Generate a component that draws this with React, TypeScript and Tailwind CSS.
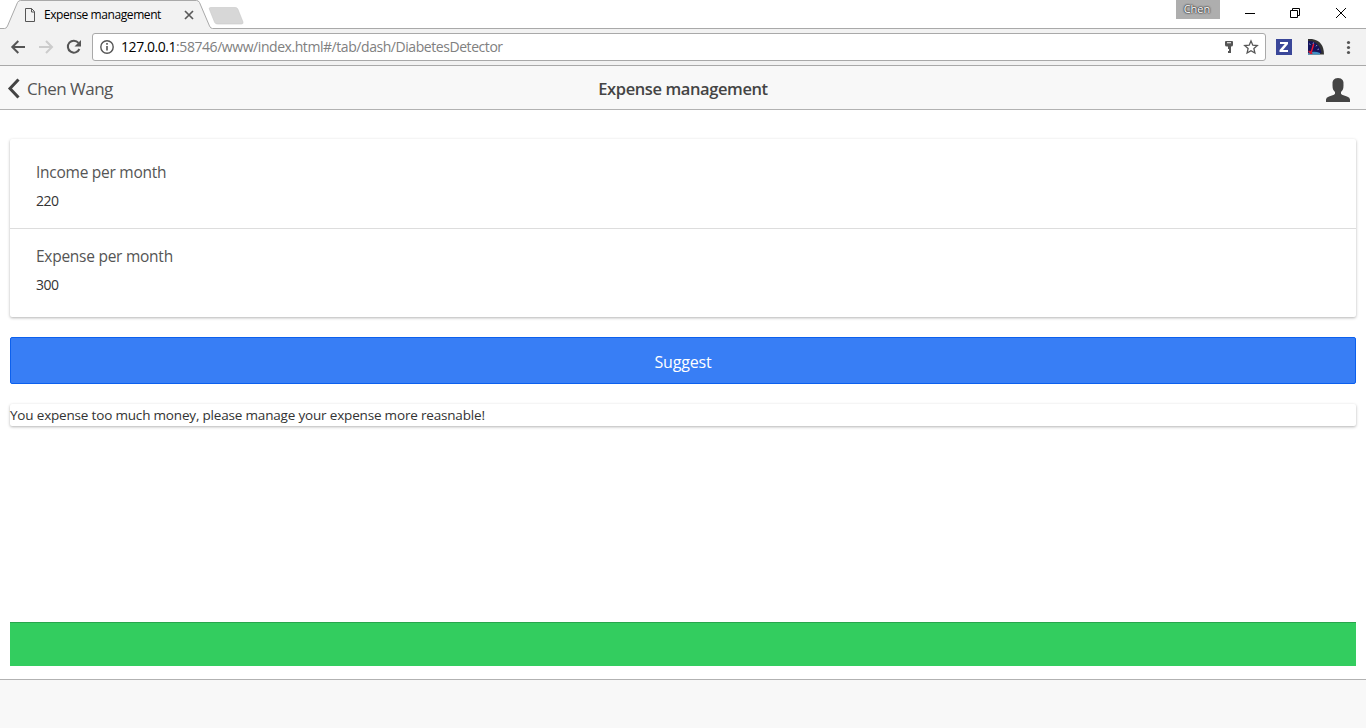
import type { ReactNode } from "react";

function TabStrip() {
  return (
    <div className="relative flex h-[29px] justify-between bg-white">
      <svg width="260" height="29" viewBox="0 0 260 29" className="block shrink-0">
        <path d="M0 28.5H4.5Q6.500 28.500 7.500 26L17.500 2.500Q18.500 .5 20.500 .5H196.500Q198.500 .5 199.500 2.500L209.500 26Q210.500 28.500 212.500 28.500H260V29H0Z" fill="#f2f2f2" />
        <path d="M0 28.500H4.500Q6.500 28.500 7.500 26L17.500 2.500Q18.500 .5 20.500 .5H196.500Q198.500 .5 199.500 2.500L209.500 26Q210.500 28.500 212.500 28.500H260" fill="none" stroke="#a9a9a9" />
        <path d="M210.500 7.500H235.500Q237 7.500 237.800 9L243 22Q243.500 24 241.500 24H217.500Q215.500 24 214.700 22.500L209.300 9Q208.800 7.500 210.500 7.500Z" fill="#d7d7d7" stroke="#c8c8c8" strokeWidth=".6" />
        <path d="M25.500 8.500H31.500L34.500 11.500V21.500H25.500ZM31.500 8.500V12H34.500" fill="none" stroke="#555" />
        <path d="M185 11L193 19M193 11L185 19" stroke="#5a5a5a" strokeWidth="1.700" />
      </svg>
      <span className="absolute top-[6px] left-[44px] text-[12px] leading-[18px] tracking-[-0.42px] whitespace-nowrap text-black">
        Expense management
      </span>
      <div className="flex grow justify-end border-b border-[#a9a9a9]">
        <div className="mr-[24px] h-[19px] w-[44px] bg-[#aeaeae] pr-[2px] text-center text-[11px] leading-[18px] text-white [text-shadow:0_0_1px_#333,0_0_2px_#333,0_0_2px_#444]">
          Chen
        </div>
        <svg width="122" height="28" viewBox="0 0 122 28" fill="none" stroke="#000" className="shrink-0">
          <path d="M1 13.500H11M46.500 10.500H53.500V17.500H46.500ZM48.500 10.500V8.500H55.500V15.500H53.500M92 8L102 18M102 8L92 18" />
        </svg>
      </div>
    </div>
  );
}

function Toolbar() {
  return (
    <div className="flex h-[37px] items-start border-b border-[#a9a9a9] bg-[#f2f2f2] pt-[4px]">
      <svg width="92" height="28" viewBox="0 33 92 28" fill="none" className="shrink-0">
        <path d="M25 47H12.500M18.300 41L12.300 47L18.300 53" stroke="#555" strokeWidth="2" />
        <path d="M39 47H51.500M46 41L52 47L46 53" stroke="#ccc" strokeWidth="2" />
        <path d="M78.500 42.800A6 6 0 1 0 79.400 49" stroke="#555" strokeWidth="2" />
        <path d="M81 40V46.500H74.500Z" fill="#555" />
      </svg>
      <div className="flex h-[28px] w-[1174px] items-center rounded-[3px] border border-[#a9a9a9] bg-white">
        <svg width="28" height="26" viewBox="93 34 28 26" fill="none" className="shrink-0">
          <circle cx="107" cy="47" r="6.200" stroke="#555" strokeWidth="1.400" />
          <path d="M107 46V50.500M107 43V44.700" stroke="#555" strokeWidth="1.600" />
        </svg>
        <span className="grow text-[14px] leading-[24px] tracking-[-0.44px] whitespace-nowrap text-[#808080]">
          <span className="text-black">127.0.0.1</span>:58746/www/index.html#/tab/dash/DiabetesDetector
        </span>
        <svg width="46" height="26" viewBox="1219 34 46 26" className="shrink-0">
          <path fillRule="evenodd" d="M1226 41H1232Q1233 41 1233 42V45Q1233 46.500 1231 46.500V53H1228V51H1229V49H1228V46.500H1227Q1225 46.500 1225 45V42Q1225 41 1226 41ZM1227 42.300V43.300H1231V42.300Z" fill="#555" />
          <path d="M1251 41L1252.800 45.200L1257.300 45.600L1253.900 48.600L1254.900 53L1251 50.700L1247.100 53L1248.100 48.600L1244.700 45.600L1249.200 45.200Z" fill="none" stroke="#555" strokeWidth="1.300" />
        </svg>
      </div>
      <svg width="100" height="28" viewBox="1266 33 100 28" className="shrink-0">
        <path d="M1276 39H1292V55H1276Z" fill="#3a4799" />
        <path d="M1280 42H1288V44L1283 50H1288V52H1279.500V50L1284.800 44H1280Z" fill="#fff" />
        <path d="M1308 39H1312Q1324 41 1324 54.500H1308Z" fill="#333" />
        <path d="M1308 41Q1319 40.500 1321.500 53L1308 54Z" fill="#14145c" />
        <path d="M1308 53Q1314 50.500 1320 53V54.500H1308Z" fill="#3d8fc4" />
        <path d="M1309.500 43.500L1310.300 45M1313.500 42.500L1313 44M1317 45L1316 46.300M1319 49L1317.500 49.600" stroke="#b8b8dc" strokeWidth=".8" />
        <path d="M1313.700 44L1310.800 53.500" stroke="#f01830" strokeWidth="1.400" />
        <path d="M1308 51Q1312 50 1312.500 54H1310Z" fill="#c81937" />
        <g fill="#555">
          <circle cx="1348.500" cy="42.500" r="1.600" />
          <circle cx="1348.500" cy="47.500" r="1.600" />
          <circle cx="1348.500" cy="52.500" r="1.600" />
        </g>
      </svg>
    </div>
  );
}

function AppHeader() {
  return (
    <header className="grid h-[44px] grid-cols-[1fr_auto_1fr] items-center border-b border-[#b2b2b2] bg-[#f8f8f8] text-[#444]">
      <div className="flex items-center">
        <svg width="27" height="43" viewBox="0 66 27 43" fill="none">
          <path d="M18.500 79.500L10 88.500L18.500 97.500" stroke="#444" strokeWidth="3" />
        </svg>
        <span className="pt-[2px] text-[17px] leading-[24px] tracking-[-0.5px] whitespace-nowrap text-[#555]">Chen Wang</span>
      </div>
      <h1 className="pt-[2px] text-[16.5px] leading-[24px] font-semibold tracking-[-0.4px] whitespace-nowrap">
        Expense management
      </h1>
      <svg width="40" height="43" viewBox="1326 66 40 43" className="justify-self-end">
        <path d="M1326 102V99.500Q1326 97.500 1329 96.600L1334 94.800Q1335.500 94 1335 92Q1332.500 90 1332.500 85.500Q1331.500 78 1338 78Q1344.500 78 1343.500 85.500Q1343.500 90 1341 92Q1340.500 94 1342 94.800L1347 96.600Q1350 97.500 1350 99.500V102Z" fill="#444" />
      </svg>
    </header>
  );
}

function Card({ children }: { children: ReactNode }) {
  return <div className="rounded-[2px] bg-white shadow-[0_1px_3px_rgba(0,0,0,0.3)]">{children}</div>;
}

function Field({ label, value }: { label: string; value: string }) {
  return (
    <div className="px-[26px]">
      <div className="text-[15.5px] leading-[24px] tracking-[-0.26px] text-[#555]">{label}</div>
      <div className="pt-[6px] text-[14px] leading-[22px] tracking-[-0.5px] text-[#333]">{value}</div>
    </div>
  );
}

export default function App() {
  return (
    <div className="flex h-[728px] w-[1366px] flex-col overflow-hidden bg-white font-['Open_Sans','Noto_Sans',sans-serif]">
      <TabStrip />
      <Toolbar />
      <AppHeader />
      <main className="flex grow flex-col px-[10px] pt-[29px] pb-[13px]">
        <Card>
          <div className="h-[90px] border-b border-[#ddd] pt-[21px]">
            <Field label="Income per month" value="220" />
          </div>
          <div className="h-[88px] pt-[15px]">
            <Field label="Expense per month" value="300" />
          </div>
        </Card>
        <button className="mt-[20px] h-[47px] rounded-[2px] border border-[#0c60ee] bg-[#387ef5] pt-[2px] text-[16px] leading-[42px] tracking-[-0.15px] text-white">
          Suggest
        </button>
        <div className="mt-[20px]">
          <Card>
            <p className="h-[22px] text-[13.5px] leading-[22px] tracking-[-0.18px] whitespace-nowrap text-[#333]">
              You expense too much money, please manage your expense more reasnable!
            </p>
          </Card>
        </div>
        <div className="mt-auto h-[44px] border-t border-[#28a54c] bg-[#33cd5f]" />
      </main>
      <footer className="h-[49px] shrink-0 border-t border-[#b2b2b2] bg-[#f8f8f8]" />
    </div>
  );
}
